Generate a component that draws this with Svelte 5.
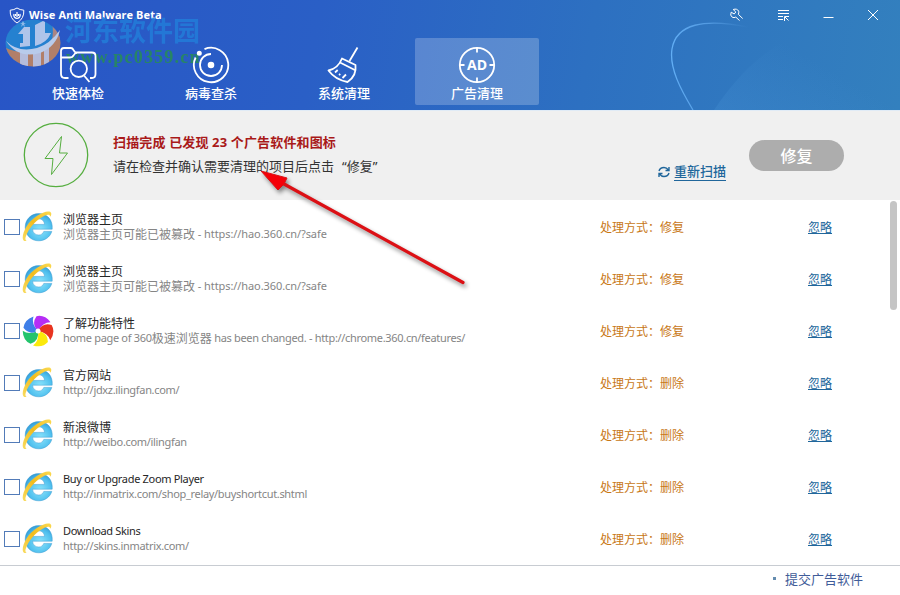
<script lang="ts">
	interface ScanItem {
		title: string;
		detail: string;
		icon: 'ie' | 'pinwheel';
		action: string;
	}

	const tabs = [
		{ id: 'checkup', label: '快速体检' },
		{ id: 'virus', label: '病毒查杀' },
		{ id: 'clean', label: '系统清理' },
		{ id: 'ads', label: '广告清理' }
	];

	const items: ScanItem[] = [
		{ title: '浏览器主页', detail: '浏览器主页可能已被篡改 - https://hao.360.cn/?safe', icon: 'ie', action: '修复' },
		{ title: '浏览器主页', detail: '浏览器主页可能已被篡改 - https://hao.360.cn/?safe', icon: 'ie', action: '修复' },
		{
			title: '了解功能特性',
			detail: 'home page of 360极速浏览器 has been changed. - http://chrome.360.cn/features/',
			icon: 'pinwheel',
			action: '修复'
		},
		{ title: '官方网站', detail: 'http://jdxz.ilingfan.com/', icon: 'ie', action: '删除' },
		{ title: '新浪微博', detail: 'http://weibo.com/ilingfan', icon: 'ie', action: '删除' },
		{
			title: 'Buy or Upgrade Zoom Player',
			detail: 'http://inmatrix.com/shop_relay/buyshortcut.shtml',
			icon: 'ie',
			action: '删除'
		},
		{ title: 'Download Skins', detail: 'http://skins.inmatrix.com/', icon: 'ie', action: '删除' }
	];

	const petals = ['#b62df5', '#e83420', '#fbe90c', '#24c46c', '#3f7fe8'];

	let active = $state('ads');
	let checked: boolean[] = $state(items.map(() => false));

	// Latin runs are set smaller than the Chinese text around them
	function runs(text: string) {
		return (text.match(/[\x20-\x7e]+|[^\x20-\x7e]+/g) ?? []).map((part) => ({
			part,
			latin: part.charCodeAt(0) < 127
		}));
	}
</script>

{#snippet mixed(text: string)}
	{#each runs(text) as run}<span class={run.latin ? 'latin' : 'han'}>{run.part}</span>{/each}
{/snippet}

<div class="window">
	<header>
		<svg class="swoosh" width="260" height="110" viewBox="0 0 260 110">
			<defs>
				<linearGradient id="swoosh-line" x1="0" y1="0" x2="1" y2="0">
					<stop offset="0" stop-color="#62aef5" />
					<stop offset="0.5" stop-color="#5aa2e8" stop-opacity="0.8" />
					<stop offset="1" stop-color="#4f96dc" stop-opacity="0" />
				</linearGradient>
				<linearGradient id="swoosh-fill" x1="0" y1="1" x2="1" y2="0">
					<stop offset="0" stop-color="#4b97d8" stop-opacity="0.25" />
					<stop offset="0.5" stop-color="#4b97d8" stop-opacity="0" />
				</linearGradient>
			</defs>
			<path d="M74 110C91 85 115 55 151 38L260 0V110Z" fill="url(#swoosh-fill)" />
			<path d="M53 110C41 90 29 68 32 49C36 24 64 18 108 27" fill="none" stroke="url(#swoosh-line)" stroke-width="1.3" />
		</svg>

		<div class="titlebar">
			<svg class="shield" width="16" height="17" viewBox="0 0 16 17" fill="none" stroke="#fff">
				<path d="M8 1Q5 3 1.2 3.2Q.6 11.5 8 16Q15.4 11.5 14.8 3.2Q11 3 8 1Z" />
				<path d="M5 7Q4 10.5 8 11.5Q12 10.5 11 7M8 5v5M6.5 7v2M9.5 7v2" stroke-width="1.2" />
			</svg>
			<span class="app-name">Wise Anti Malware Beta</span>
			<div class="controls">
				<svg width="15" height="14" viewBox="0 0 15 14" fill="none" stroke="#fff">
					<path d="M4.2 1.5L6.8 4L5.2 6L2.2 4.2Q.7 7.4 3.2 9.2Q5 10.1 6.8 9.1L10.5 12.5M4.2 1.5Q8.1 .2 9.7 3.2Q10.1 5 9.3 6.3L13.7 10.5" />
				</svg>
				<svg width="13" height="13" viewBox="0 0 13 13" fill="none" stroke="#fff">
					<path d="M1 1.5H12M1 4.5H12M1 7.5H6M1 10.5H6M11.5 11.5L8 8M7.5 12V7.5H12" />
				</svg>
				<svg width="11" height="13" viewBox="0 0 11 13" stroke="#fff"><path d="M.5 8.5H10.5" /></svg>
				<svg width="12" height="12" viewBox="0 0 12 12" stroke="#fff"><path d="M1 1L11 11M11 1L1 11" /></svg>
			</div>
		</div>

		<div class="watermark">
			<svg width="60" height="56" viewBox="0 0 60 56">
				<defs>
					<clipPath id="globe"><ellipse cx="29" cy="31" rx="27.5" ry="23.5" /></clipPath>
				</defs>
				<g clip-path="url(#globe)">
					<path d="M0 0H60V28Q28 35 9 52L0 40Z" fill="#2586d2" />
					<path d="M46 6H60V22Q56 32 44 37Q51 27 48 10Z" fill="#b98b7c" />
					<path d="M0 35Q28 50 60 20V56H0Z" fill="#c08460" />
					<path d="M14 22L20 15H26V34L16 35V31H19V22ZM31 13L41 8V21H47Q43 31 31 34Z" fill="#bed0ee" />
					<path d="M16 40H24V56H16ZM29 40H37V56H29ZM40 36H45V56H40Z" fill="#c5c8de" />
				</g>
				<path d="M2 29Q14 41 33 36Q46 32 56 18Q52 35 36 41Q14 47 2 29Z" fill="#c8d8f0" />
				<path d="M19 9l1 2h2l-2 1 1 3-2-2-2 2 1-3-2-1h2z" fill="#9cc4ec" />
			</svg>
			<div class="mark-text">
				<span class="mark-name">河东软件园</span>
				<span class="mark-url">www.pc0359.cn</span>
			</div>
		</div>

		<nav>
			{#each tabs as tab (tab.id)}
				<button class="tab" class:active={active === tab.id} onclick={() => (active = tab.id)}>
					<svg width="40" height="40" viewBox="0 0 40 40" fill="none" stroke="#fff" stroke-width="1.8" stroke-linejoin="round">
						{#if tab.id === 'checkup'}
							<path d="M10.5 33H7Q3 33 3 29V6Q3 3 6 3H13Q14.5 3 15.5 5L16.5 6.5Q17 7.5 18.5 7.5H34Q37.5 7.5 37.5 11V29Q37.5 33 34 33H32M3 12.5H12Q14.5 12.5 15.5 10.5Q16.5 8 19 7.8" />
							<circle cx="20.8" cy="23.8" r="8.2" />
							<path d="M26 30.5L31.5 37" />
						{:else if tab.id === 'virus'}
							<path d="M13.5 4.1A17.2 17.2 0 1 1 4.6 12.5M20 9A11 11 0 0 0 20 31A11 11 0 0 0 31 20" />
							<circle cx="20" cy="20" r="2.4" fill="#fff" />
							<circle cx="8.3" cy="8.3" r="1.6" fill="#fff" />
						{:else if tab.id === 'clean'}
							<path d="M33.5 2.5L25.5 16M18 13.5L31.5 20Q32.8 31 23.5 37Q11 34.5 4.5 25.5Q14 23.5 18 13.5ZM16 17.5L30.8 25M11 27.5L13.7 25M18.5 33L22 29.5M15 30L16.3 29" />
						{:else}
							<circle cx="20" cy="20" r="17.2" />
							<path d="M20 2.5v5M20 32.5v5M2.5 20h5M32.5 20h5" />
							<text x="20" y="25" text-anchor="middle" stroke="none">AD</text>
						{/if}
					</svg>
					<span>{tab.label}</span>
				</button>
			{/each}
		</nav>
	</header>

	<section class="status">
		<svg class="bolt" width="66" height="66" viewBox="0 0 66 66" fill="none" stroke="#56ae40">
			<circle cx="33" cy="33" r="31.7" stroke-width="1.3" />
			<path d="M38.5 14.5L22 36.5H30L28.5 52.5L44.5 31H36.5Z" />
		</svg>
		<div class="summary">
			<strong>扫描完成 已发现 23 个广告软件和图标</strong>
			<p>请在检查并确认需要清理的项目后点击<span class="quote">“</span>修复<span>”</span></p>
		</div>
		<a class="rescan" href="#rescan">
			<svg width="12" height="12" viewBox="0 0 12 12" fill="none" stroke="#20669b" stroke-width="1.4">
				<path d="M1 5Q2 1.5 6 1.5Q8.5 1.5 10.5 4M11 1V4.5H7.5M11 7Q10 10.5 6 10.5Q3.5 10.5 1.5 8M1 11V7.5H4.5" />
			</svg>
			<span>重新扫描</span>
		</a>
		<button class="repair">修复</button>
	</section>

	<main>
		<ul>
			{#each items as item, i}
				<li>
					<input type="checkbox" bind:checked={checked[i]} />
					{#if item.icon === 'ie'}
						<svg class="app-icon" width="32" height="32" viewBox="0 0 32 32">
							<defs>
								<radialGradient id="ie-blue-{i}" cx="0.55" cy="0.6" r="0.65">
									<stop offset="0" stop-color="#8ce4fc" />
									<stop offset="0.65" stop-color="#50c0ee" />
									<stop offset="1" stop-color="#2f95d2" />
								</radialGradient>
								<linearGradient id="ie-gold-{i}" x1="0" y1="1" x2="1" y2="0">
									<stop offset="0" stop-color="#f9dc62" />
									<stop offset="0.5" stop-color="#f2bc1c" />
									<stop offset="1" stop-color="#fbd951" />
								</linearGradient>
							</defs>
							<path
								d="M16.6 2.6C9 2.6 3.2 8.6 3.2 16.2C3.2 24 9 29.8 16.6 29.8C22.8 29.8 28 26.2 29.8 20.4H21.8C20.8 22.8 19.2 24 16.8 24C13.2 24 10.8 21.8 10.6 18.2H30.2C31 9 25.4 2.6 16.6 2.6ZM10.8 13.4C11.2 9.8 13.6 7.8 16.7 7.8C19.9 7.8 22.3 9.8 22.6 13.4Z"
								fill="url(#ie-blue-{i})"
								fill-rule="evenodd"
								stroke="#3b9bd0"
								stroke-width="0.5"
							/>
							<path
								d="M4.6 30C-1.4 31 .3 22.6 4.5 15.4C10.3 6.2 22.4-.6 27.3.6C29.5 1.2 29.9 3.2 28.4 5.8C27.9 3.2 26 3.2 23 4.5C15.4 8 8.6 15.2 5.2 22.2C3 26.6 2.8 28.9 4.6 30Z"
								fill="url(#ie-gold-{i})"
							/>
						</svg>
					{:else}
						<svg class="app-icon" width="32" height="32" viewBox="0 0 32 32">
							{#each petals as color, p}
								<path d="M16 16Q9 9 14.5 1.2Q22.5-.6 28.5 7.2Q21 7 16 16Z" fill={color} transform="rotate({p * 72} 16 16)" />
							{/each}
							<circle cx="16" cy="16" r="2.5" fill="#fff" />
						</svg>
					{/if}
					<div class="info">
						<span class="title">{@render mixed(item.title)}</span>
						<span class="detail">{@render mixed(item.detail)}</span>
					</div>
					<span class="method">处理方式：{item.action}</span>
					<a class="ignore" href="#ignore">忽略</a>
				</li>
			{/each}
		</ul>
		<div class="scrollbar"><div class="thumb"></div></div>
	</main>

	<footer>
		<span class="dot"></span>
		<a href="#submit">提交广告软件</a>
	</footer>

	<svg class="pointer" width="225" height="135" viewBox="0 0 225 135">
		<path d="M24 14L203 112.5" stroke="#dc1015" stroke-width="3.2" stroke-linecap="round" />
		<path d="M1 1L27 8L24 14L18 20Z" fill="#f50008" stroke="#d91216" />
	</svg>
</div>

<style>
	:global(body) {
		margin: 0;
	}

	.window {
		position: relative;
		display: flex;
		flex-direction: column;
		width: 900px;
		height: 595px;
		overflow: hidden;
		background: #fff;
		font-family: 'Noto Sans', 'Noto Sans CJK SC', sans-serif;
		font-size: 12px;
	}

	button {
		border: 0;
		padding: 0;
		font-family: inherit;
	}

	header {
		position: relative;
		height: 110px;
		flex: none;
		background: linear-gradient(100deg, #2855c6 0%, #2a5fc6 35%, #2d70c1 65%, #3380be 100%);
	}

	.swoosh {
		position: absolute;
		right: 0;
		top: 0;
	}

	.titlebar {
		position: relative;
		display: flex;
		align-items: center;
		height: 30px;
		padding: 0 21px 0 9px;
	}

	.app-name {
		margin: 0 0 0 4px;
		font-size: 11px;
		font-weight: 700;
		letter-spacing: 0.12px;
		line-height: 14px;
		color: #fff;
		white-space: nowrap;
	}

	.controls {
		display: flex;
		align-items: center;
		gap: 33px;
		margin-left: auto;
	}

	nav {
		position: relative;
		display: flex;
		gap: 9px;
		padding: 8px 0 0 16px;
	}

	.tab {
		display: flex;
		flex-direction: column;
		align-items: center;
		width: 124px;
		height: 67px;
		padding-top: 7px;
		border-radius: 2px;
		background: none;
		color: #fff;
	}

	.tab.active {
		background: rgba(255, 255, 255, 0.22);
	}

	.tab svg {
		flex: none;
	}

	.tab text {
		font-family: 'Open Sans', 'Noto Sans', sans-serif;
		font-size: 14px;
		font-weight: 700;
		fill: #fff;
	}

	.tab span {
		font-size: 13px;
		font-weight: 500;
		line-height: 18px;
		margin-top: -1px;
	}

	.watermark {
		position: absolute;
		left: 4px;
		top: 12px;
		display: flex;
		opacity: 0.9;
		pointer-events: none;
	}

	.mark-text {
		display: flex;
		flex-direction: column;
		white-space: nowrap;
	}

	.mark-name {
		margin: 4px 0 0 1px;
		font-size: 27px;
		font-weight: 700;
		line-height: 29px;
		color: #237bd8;
	}

	.mark-url {
		margin: 2px 0 0 2px;
		font-family: 'Liberation Serif', serif;
		font-size: 18px;
		font-weight: 700;
		letter-spacing: 1.2px;
		line-height: 20px;
		color: #278a5c;
	}

	.status {
		display: flex;
		align-items: flex-start;
		flex: none;
		height: 90px;
		box-sizing: border-box;
		border-top: 1px solid #e0ebf6;
		background: #f0f0f0;
	}

	.bolt {
		margin: 11px 0 0 23px;
	}

	.summary {
		width: 545px;
		margin: 20px 0 0 24px;
		font-size: 13px;
		color: #333;
	}

	.summary strong {
		display: block;
		letter-spacing: 0.15px;
		line-height: 22px;
		color: #a91919;
	}

	.summary p {
		margin: 2px 0 0;
		line-height: 22px;
	}

	.quote {
		margin-left: 8px;
	}

	.rescan {
		display: flex;
		align-items: center;
		gap: 4px;
		margin-top: 52px;
		color: #20669b;
		font-size: 13px;
		font-weight: 500;
		line-height: 17px;
		text-decoration: none;
		white-space: nowrap;
	}

	.rescan span {
		border-bottom: 1px solid #20669b;
	}

	.repair {
		width: 95px;
		height: 31px;
		margin: 29px 0 0 23px;
		flex: none;
		border-radius: 16px;
		background: #adadad;
		color: #fff;
		font-size: 16px;
		font-weight: 500;
		line-height: 30px;
	}

	main {
		display: flex;
		flex: none;
		height: 365px;
	}

	ul {
		flex: 1;
		margin: 0;
		padding: 1px 0 0;
		list-style: none;
	}

	li {
		display: flex;
		align-items: center;
		height: 52px;
		padding-left: 4px;
	}

	input {
		appearance: none;
		width: 16px;
		height: 16px;
		margin: 0;
		flex: none;
		border: 1px solid #527bb8;
		background: #fff;
	}

	input:checked {
		background: #527bb8;
	}

	.app-icon {
		flex: none;
		margin: 0 9px 0 2px;
	}

	.info {
		display: flex;
		flex-direction: column;
		width: 537px;
		font-family: 'Liberation Sans', 'Noto Sans CJK SC', sans-serif;
		white-space: nowrap;
		line-height: 15px;
	}

	.latin {
		font-family: 'Noto Sans', sans-serif;
		font-size: 11px;
		letter-spacing: -0.32px;
		line-height: 12px;
		white-space: pre;
	}

	.title {
		color: #262626;
	}

	.title .han {
		line-height: 12px;
		vertical-align: -1px;
	}

	.detail {
		margin: 1px 0 -1px;
		color: #858585;
	}

	.detail .latin {
		vertical-align: 1px;
	}

	/* a URL that follows Chinese text is spaced a little wider */
	.detail .han:first-child + .latin {
		letter-spacing: -0.08px;
	}

	.method {
		width: 208px;
		color: #c87716;
	}

	.ignore {
		color: #20669b;
		text-underline-offset: 1px;
	}

	.scrollbar {
		width: 10px;
		padding-top: 1px;
	}

	.thumb {
		width: 7px;
		height: 109px;
		border-radius: 4px;
		background: #c5c5c5;
	}

	footer {
		display: flex;
		align-items: center;
		justify-content: flex-end;
		flex: 1;
		padding: 0 37px 4px 0;
		border-top: 1px solid #c8ccd2;
		font-size: 13px;
	}

	footer a {
		color: #3f5c99;
		text-decoration: none;
	}

	.dot {
		width: 3px;
		height: 3px;
		margin-right: 9px;
		background: #648caf;
	}

	.pointer {
		position: absolute;
		left: 260px;
		top: 170px;
		pointer-events: none;
		filter: drop-shadow(2px 3px 2px rgba(0, 0, 0, 0.45));
	}
</style>
